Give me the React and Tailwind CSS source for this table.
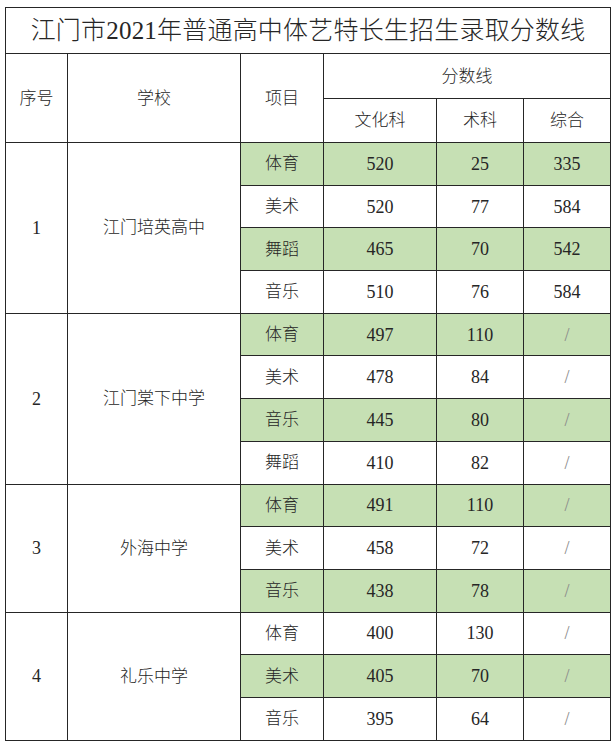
const rows = [
  {
    no: '1',
    school: '江门培英高中',
    items: [
      { name: '体育', a: '520', b: '25', c: '335', green: true },
      { name: '美术', a: '520', b: '77', c: '584' },
      { name: '舞蹈', a: '465', b: '70', c: '542', green: true },
      { name: '音乐', a: '510', b: '76', c: '584' },
    ],
  },
  {
    no: '2',
    school: '江门棠下中学',
    items: [
      { name: '体育', a: '497', b: '110', c: '/', green: true },
      { name: '美术', a: '478', b: '84', c: '/' },
      { name: '音乐', a: '445', b: '80', c: '/', green: true },
      { name: '舞蹈', a: '410', b: '82', c: '/' },
    ],
  },
  {
    no: '3',
    school: '外海中学',
    items: [
      { name: '体育', a: '491', b: '110', c: '/', green: true },
      { name: '美术', a: '458', b: '72', c: '/' },
      { name: '音乐', a: '438', b: '78', c: '/', green: true },
    ],
  },
  {
    no: '4',
    school: '礼乐中学',
    items: [
      { name: '体育', a: '400', b: '130', c: '/' },
      { name: '美术', a: '405', b: '70', c: '/', green: true },
      { name: '音乐', a: '395', b: '64', c: '/' },
    ],
  },
];

const cell = 'border border-[#262626] text-center align-middle p-0';

export default function App() {
  return (
    <div
      className="w-[614px] h-[752px] bg-white pt-[7px] pl-[5px] text-[#262626] font-light"
      style={{ fontFamily: '"Liberation Serif", "Noto Sans CJK SC", serif' }}
    >
      <table className="table-fixed border-collapse w-[606px] text-[17px] leading-none">
        <colgroup>
          <col className="w-[62px]" />
          <col className="w-[173px]" />
          <col className="w-[83px]" />
          <col className="w-[113px]" />
          <col className="w-[87px]" />
          <col className="w-[87px]" />
        </colgroup>
        <thead>
          <tr className="h-[46px]">
            <th colSpan={6} className={`${cell} text-[25px] font-light tracking-[0.2px]`}>
              江门市2021年普通高中体艺特长生招生录取分数线
            </th>
          </tr>
          <tr className="h-[45px]">
            <th rowSpan={2} className={`${cell} font-light`}>序号</th>
            <th rowSpan={2} className={`${cell} font-light`}>学校</th>
            <th rowSpan={2} className={`${cell} font-light`}>项目</th>
            <th colSpan={3} className={`${cell} font-light`}>分数线</th>
          </tr>
          <tr className="h-[44px]">
            <th className={`${cell} font-light`}>文化科</th>
            <th className={`${cell} font-light`}>术科</th>
            <th className={`${cell} font-light`}>综合</th>
          </tr>
        </thead>
        <tbody>
          {rows.map((group) =>
            group.items.map((item, i) => {
              const bg = item.green ? 'bg-[#c6e0b4]' : 'bg-white';
              return (
                <tr key={group.no + i} className="h-[42.7px]">
                  {i === 0 && (
                    <>
                      <td rowSpan={group.items.length} className={`${cell} text-[18px]`}>{group.no}</td>
                      <td rowSpan={group.items.length} className={cell}>{group.school}</td>
                    </>
                  )}
                  <td className={`${cell} ${bg}`}>{item.name}</td>
                  <td className={`${cell} ${bg} text-[18px]`}>{item.a}</td>
                  <td className={`${cell} ${bg} text-[18px]`}>{item.b}</td>
                  <td className={`${cell} ${bg} text-[18px] ${item.c === '/' ? 'text-[#8a8a8a]' : ''}`}>
                    {item.c}
                  </td>
                </tr>
              );
            })
          )}
        </tbody>
      </table>
    </div>
  );
}
